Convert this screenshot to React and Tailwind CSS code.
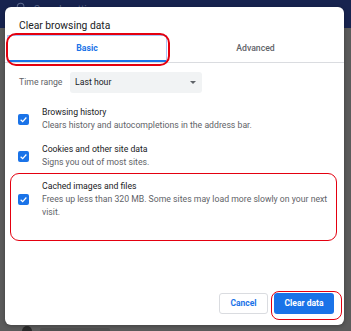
import React from "react";
import { Search } from "lucide-react";

const font = { fontFamily: "Roboto, 'Liberation Sans', sans-serif" };

function Check() {
  return (
    <span className="flex h-[11px] w-[11px] shrink-0 items-center justify-center rounded-[2px] bg-[#1a73e8]">
      <svg viewBox="0 0 12 12" className="h-[9px] w-[9px]">
        <path d="M2.2 6.3 L4.9 8.8 L9.8 3.4" fill="none" stroke="white" strokeWidth="1.7" />
      </svg>
    </span>
  );
}

function Item({ title, children }) {
  return (
    <div className="flex items-center">
      <div className="flex w-[37px] shrink-0 pl-[13px]">
        <Check />
      </div>
      <div className="pr-[10px] text-[8.7px] leading-[13px]">
        <div className="text-[#202124]">{title}</div>
        <div className="text-[#5f6368]">{children}</div>
      </div>
    </div>
  );
}

export default function App() {
  return (
    <div className="relative h-[331px] w-[351px] overflow-hidden bg-[#5b5b5b]" style={font}>
      <div className="flex h-[28px] items-start gap-[8px] bg-[#17234f] pl-[16px] pt-[2px] text-[10px] text-[#5d6a8f]">
        <Search className="h-[10px] w-[10px]" strokeWidth={2.5} />
        <span>Search settings</span>
      </div>
      <div className="flex items-center gap-[8px] pl-[22px] pt-[298px]">
        <span className="h-[10px] w-[10px] rounded-full bg-[#2a2a2a]" />
        <span className="h-[6px] w-[70px] rounded-[2px] bg-[#505050]" />
      </div>

      <div className="absolute left-[5px] top-[7px] flex h-[318px] w-[339px] flex-col rounded-[6px] bg-white shadow-[0_1px_4px_rgba(0,0,0,0.3)]">
        <div className="px-[14px] pt-[12px] text-[10.3px] leading-[14px] text-[#202124]">
          Clear browsing data
        </div>

        <div className="mt-[2px] flex h-[28px] border-b border-[#dadce0] text-[8.7px]">
          <div className="ml-[2px] flex w-[160px] items-center justify-center border border-b-0 border-[#a8c7fa] font-bold text-[#1a73e8] shadow-[inset_0_-2px_0_#1a73e8]">
            Basic
          </div>
          <div className="flex flex-1 items-center justify-center font-medium text-[#5f6368]">
            Advanced
          </div>
        </div>

        <div className="mt-[9px] flex items-center pl-[14px] text-[8.7px]">
          <span className="w-[51px] text-[#5f6368]">Time range</span>
          <div className="flex h-[21px] w-[132px] items-center justify-between rounded-[3px] bg-[#f1f3f4] pl-[5px] pr-[6px] text-[#202124]">
            <span>Last hour</span>
            <svg viewBox="0 0 10 5" className="h-[3px] w-[6px]">
              <path d="M0 0 L10 0 L5 5 Z" fill="#5f6368" />
            </svg>
          </div>
        </div>

        <div className="mt-[13px] flex flex-col gap-[11px]">
          <Item title="Browsing history">Clears history and autocompletions in the address bar.</Item>
          <Item title="Cookies and other site data">Signs you out of most sites.</Item>
          <Item title="Cached images and files">
            Frees up less than 320 MB. Some sites may load more slowly on your next visit.
          </Item>
        </div>

        <div className="mt-auto flex justify-end gap-[6px] pb-[11px] pr-[10px] text-[8.5px] font-bold">
          <button className="h-[21px] w-[49px] rounded-[3px] border border-[#dadce0] bg-white text-[#1a73e8]">
            Cancel
          </button>
          <button className="h-[21px] w-[60px] rounded-[3px] bg-[#1a73e8] text-white">
            Clear data
          </button>
        </div>

        <div className="pointer-events-none absolute left-[1px] top-[26px] h-[33px] w-[164px] rounded-[10px] border-[2px] border-[#e4000f]" />
        <div className="pointer-events-none absolute left-[5px] top-[166px] h-[68px] w-[327px] rounded-[9px] border-[1.5px] border-[#e4000f]" />
        <div className="pointer-events-none absolute left-[266px] top-[284px] h-[29px] w-[71px] rounded-[8px] border-[1.5px] border-[#e4000f]" />
      </div>
    </div>
  );
}
